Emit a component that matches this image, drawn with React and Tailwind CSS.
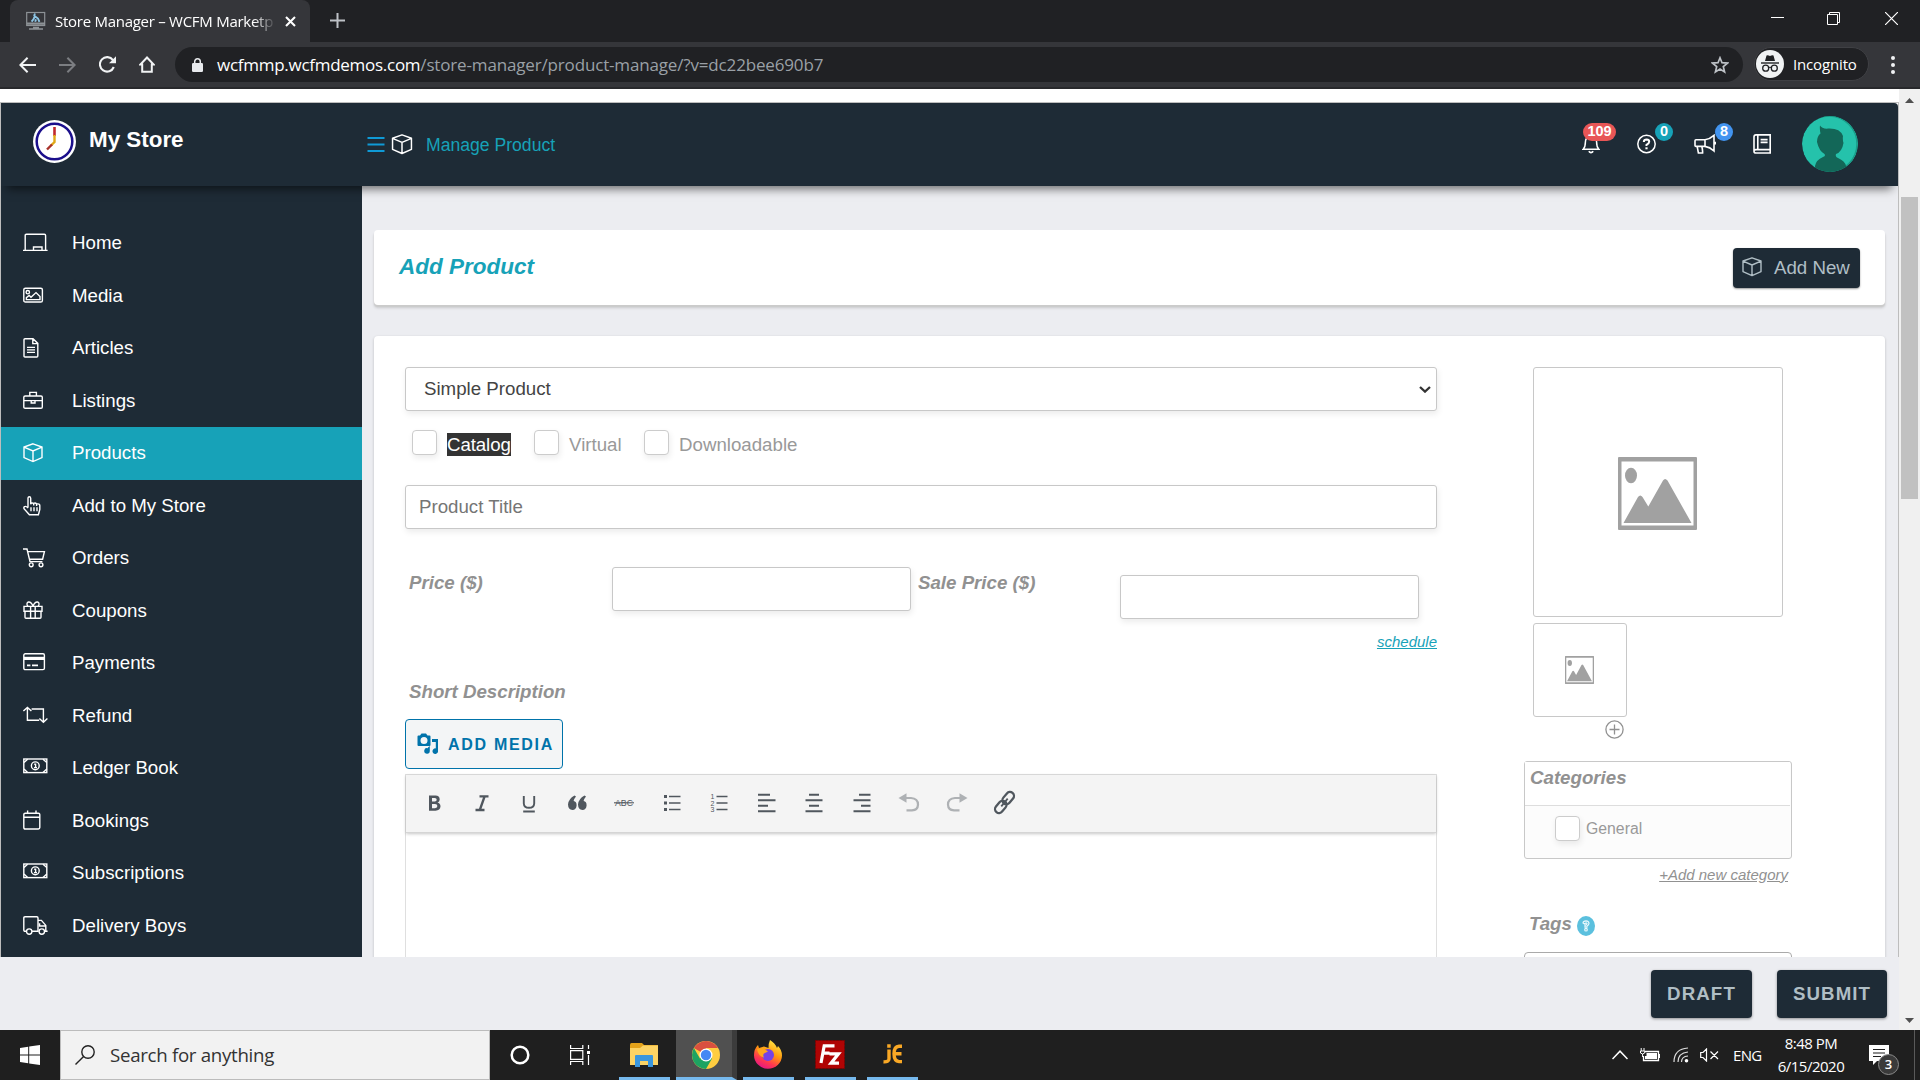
import React from 'react';

// --- CONTENT ---
const menuItems = [
  { label: 'Home', icon: 'home' },
  { label: 'Media', icon: 'media' },
  { label: 'Articles', icon: 'file' },
  { label: 'Listings', icon: 'briefcase' },
  { label: 'Products', icon: 'cube', active: true },
  { label: 'Add to My Store', icon: 'hand' },
  { label: 'Orders', icon: 'cart' },
  { label: 'Coupons', icon: 'gift' },
  { label: 'Payments', icon: 'card' },
  { label: 'Refund', icon: 'retweet' },
  { label: 'Ledger Book', icon: 'bill' },
  { label: 'Bookings', icon: 'calendar' },
  { label: 'Subscriptions', icon: 'bill' },
  { label: 'Delivery Boys', icon: 'truck' },
];

const cubePath = 'M10 .8 19 4v10.6L10 18.6 1 14.6V4zM1 4.2l9 3.8 9-3.8M10 8v10.4';

// Outline icons on a 25x20 grid, all starting at the left edge
const menuIcons = {
  home: <path d="M2.2 17.3V2.4Q2.2 1.2 3.4 1.2H21.4Q22.6 1.2 22.6 2.4V17.3M0 17.4H24.6M10.5 17V14H19V17" />,
  media: (
    <>
      <rect x=".8" y="2.2" width="18.6" height="13.8" rx="1.6" />
      <circle cx="4.8" cy="6.2" r="1.7" />
      <path d="M3.4 13.6V11.6L6.2 9.4 8 11.2 13 6.6 17 10.6V13.6Z" />
    </>
  ),
  file: (
    <>
      <path d="M1 1.8Q1 .8 2 .8H10L14.8 5.4V18Q14.8 19 13.8 19H2Q1 19 1 18ZM9.8 1V5.6H14.6" />
      <path d="M4 9.4H12M4 11.9H12M4 14.4H12" />
    </>
  ),
  briefcase: <path d="M2.2 5H18Q19.3 5 19.3 6.2V16Q19.3 17.2 18 17.2H2.2Q.8 17.2 .8 16V6.2Q.8 5 2.2 5ZM6.8 5V1.4H13.4V5M1 9.6H8.2M12 9.6H19.2M8.2 9.6V12H12V9.6Z" />,
  cube: <path d={cubePath} />,
  hand: <path d="M5 11.6V2.3Q5 .8 6.3 .8T7.7 2.3V8.2Q8.4 6.2 10.7 7.4 12.4 6.4 13.6 8 16.8 7.4 16.8 9.6V13.4L15.4 18.8H6.4L1 12.6Q.4 10.6 2.2 10.4 3.4 10.2 5 12M8 11.2V15.2M11 11.2V15.2M14 11.2V15.2M10.7 7.6V9.6M13.6 8V10" />,
  cart: (
    <>
      <path d="M0 1H4L7 13.6H19.4M5 3.6H21.4L19.6 11.2H6.6" />
      <circle cx="8.2" cy="16.8" r="1.9" />
      <circle cx="18" cy="16.8" r="1.9" />
    </>
  ),
  gift: <path d="M1 5.4H19V10.2H1ZM2 10.4V16.2Q2 17.2 3 17.2H17Q18 17.2 18 16.2V10.4M7.6 5.4V17M12.2 5.4V17M10 5.2Q8.4 .8 5.6 1 3.4 1.4 4.2 4L5 5.4M10 5.2Q11.6 .8 14.4 1 16.6 1.4 15.8 4L15 5.4" />,
  card: (
    <>
      <rect x=".8" y=".8" width="20.6" height="15.8" rx="1.4" />
      <path d="M1 5.4H21.4" strokeWidth="3.2" />
      <path d="M4 12.4H7.4M9 12.4H15" strokeWidth="1.6" />
    </>
  ),
  retweet: <path d="M.4 5 4.4 1.4 8.4 5M4.4 1.6V14.2H16.2M8.6 3H20.4V15.4M16.4 12.6 20.4 16.2 24.4 12.6" />,
  bill: (
    <>
      <rect x=".8" y="1" width="23" height="13.6" />
      <circle cx="12.3" cy="7.8" r="3.9" />
      <path d="M11.2 6.2H12.6V9.6M11 9.6H14M1 4.6 4.6 1.2M20 1.2 23.8 4.6M1 11 4.6 14.4M20 14.4 23.8 11" />
    </>
  ),
  calendar: <path d="M2.2 2.2H15.4Q16.8 2.2 16.8 3.6V16.6Q16.8 18 15.4 18H2.2Q.8 18 .8 16.6V3.6Q.8 2.2 2.2 2.2ZM.8 6.2H16.8M4.6 2.2V-.6M13 2.2V-.6" />,
  truck: (
    <>
      <path d="M3.4 15.2H2Q.8 15.2 .8 14V2Q.8 .8 2 .8H13.8Q15 .8 15 2V15.2H9M15 4.4H18.4L22.8 9.4V15.2H21.4M24.6 15.2H22M16.6 7.2V10H22.6" />
      <circle cx="6.2" cy="15.6" r="2.7" />
      <circle cx="18.8" cy="15.6" r="2.7" />
    </>
  ),
};

function MenuIcon({ name }) {
  return (
    <svg className="h-5 w-[25px] overflow-visible" viewBox="0 0 25 20" fill="none" stroke="currentColor" strokeWidth="1.4">
      {menuIcons[name]}
    </svg>
  );
}

function Cube({ className }) {
  return (
    <svg className={className} viewBox="0 0 20 20" fill="none" stroke="currentColor" strokeWidth="1.4" strokeLinejoin="round">
      <path d={cubePath} />
    </svg>
  );
}

// --- BROWSER CHROME ---
function TabStrip() {
  return (
    <div className="flex h-[42px] items-start bg-[#202124] text-[#e8eaed]">
      <div className="ml-[10px] flex h-[42px] w-[300px] items-center rounded-t-lg bg-[#35363a] pl-4">
        <svg className="h-5 w-5 shrink-0" viewBox="0 0 20 20" fill="none" stroke="#8d9296">
          <rect x=".7" y="1.5" width="18" height="13" strokeWidth="1.2" />
          <path d="M1 12.2H19M1 14H19" strokeWidth="1.5" />
          <path d="M7 16.5H13M3 18H17" strokeWidth="1.3" />
          <path d="M9 2.5 8 5M8.6 5 12 7.5 13.4 10.8M9 5 7.6 8 5.6 10.6M10 8.4 9.2 10.8" stroke="#8cc4e4" strokeWidth="1.9" />
        </svg>
        <div className="ml-[9px] w-[221px] text-[15px] tracking-[-0.27px] whitespace-nowrap text-white [mask-image:linear-gradient(to_right,black_90%,transparent)]">
          Store Manager – WCFM Marketp
        </div>
        <svg className="ml-[9px] h-[11px] w-[11px] shrink-0" viewBox="0 0 11 11" stroke="#fff" strokeWidth="2.1">
          <path d="M1 1 10 10M10 1 1 10" />
        </svg>
      </div>
      <svg className="mt-[13px] ml-5 h-[15px] w-[15px]" viewBox="0 0 15 15" stroke="#bdc1c6" strokeWidth="2">
        <path d="M7.5 0V15M0 7.5H15" />
      </svg>
      <div className="mt-3 mr-[22px] ml-auto flex h-[13px] items-center">
        <svg className="h-[13px] w-[13px]" viewBox="0 0 13 13" stroke="#fff">
          <path d="M0 5.5H13" />
        </svg>
        <svg className="ml-[43px] h-[13px] w-[13px]" viewBox="0 0 13 13" fill="none" stroke="#fff">
          <path d="M.5 2.5H10.5V12.5H.5ZM2.5 2.5V.5H12.5V10.5H10.5" />
        </svg>
        <svg className="ml-[45px] h-[13px] w-[13px]" viewBox="0 0 13 13" stroke="#fff" strokeWidth="1.2">
          <path d="M0 0 13 13M13 0 0 13" />
        </svg>
      </div>
    </div>
  );
}

function AddressBar() {
  return (
    <div className="flex h-[47px] items-start border-b-2 border-[#28292c] bg-[#35363a] pt-[5px] text-[#e8eaed]">
      <div className="flex h-[35px] w-[175px] items-center gap-6 pl-[19px]">
        <svg className="h-4 w-[17px]" viewBox="0 0 17 16" fill="none" stroke="#f1f3f4" strokeWidth="2">
          <path d="M17 8H2M8.6 .8 1.4 8 8.6 15.2" />
        </svg>
        <svg className="-ml-px h-4 w-[17px]" viewBox="0 0 17 16" fill="none" stroke="#7c7e82" strokeWidth="2">
          <path d="M0 8H15M8.4 .8 15.6 8 8.4 15.2" />
        </svg>
        <svg className="-ml-px h-[17px] w-[17px]" viewBox="0 0 17 17" fill="none" stroke="#f1f3f4" strokeWidth="2.1">
          <path d="M14.8 11A7.2 7.2 0 1 1 14 4.2" />
          <path d="M17 .3V7.2H10Z" fill="#f1f3f4" stroke="none" />
        </svg>
        <svg className="-ml-px h-[17px] w-4" viewBox="0 0 16 17" fill="none" stroke="#f1f3f4" strokeWidth="2">
          <path d="M8 1.5 14.5 8.4H12.8V15.8H3.2V8.4H1.5Z" />
        </svg>
      </div>
      <div className="flex h-[35px] w-[1568px] items-center rounded-full bg-[#202124] pr-[14px] pl-[17px]">
        <svg className="h-[14px] w-[11px]" viewBox="0 0 11 14" fill="none">
          <rect y="5" width="11" height="9" rx="1.2" fill="#e8eaed" />
          <path d="M2.7 6V3.6A2.8 2.8 0 0 1 8.3 3.6V6" stroke="#e8eaed" strokeWidth="1.5" />
        </svg>
        <div className="ml-[14px] text-[17px] tracking-[-0.16px] text-[#9aa0a6]">
          <span className="tracking-[-0.27px] text-white">wcfmmp.wcfmdemos.com</span>/store-manager/product-manage/?v=dc22bee690b7
        </div>
        <svg className="ml-auto h-[18px] w-[18px]" viewBox="0 0 18 18" fill="none" stroke="#bdc1c6" strokeWidth="1.7">
          <path d="M9 1.8 11 6.7 16.5 7.1 12.3 10.6 13.6 16 9 13.1 4.4 16 5.7 10.6 1.5 7.1 7 6.7Z" />
        </svg>
      </div>
      <div className="ml-[11px] flex h-[34px] w-[115px] items-center rounded-full border border-[#3f4044] bg-[#202124] pl-px">
        <svg className="h-7 w-7" viewBox="0 0 28 28" fill="none">
          <circle cx="14" cy="14" r="14" fill="#f1f3f4" />
          <path d="M10.5 5.5Q12 5 14 6 16 5 17.5 5.5L19 11H9Z" fill="#202124" />
          <path d="M5 13H23" stroke="#202124" strokeWidth="1.4" />
          <circle cx="9.7" cy="18.2" r="3" stroke="#202124" strokeWidth="1.3" />
          <circle cx="18.3" cy="18.2" r="3" stroke="#202124" strokeWidth="1.3" />
          <path d="M12.7 17.6Q14 16.8 15.3 17.6" stroke="#202124" />
        </svg>
        <span className="ml-[9px] text-[15px] tracking-[-0.15px] text-white">Incognito</span>
      </div>
      <div className="mt-[9px] ml-[22px] flex flex-col gap-[3px]">
        <i className="h-1 w-1 rounded-full bg-[#f1f3f4]" />
        <i className="h-1 w-1 rounded-full bg-[#f1f3f4]" />
        <i className="h-1 w-1 rounded-full bg-[#f1f3f4]" />
      </div>
    </div>
  );
}

// --- STORE MANAGER ---
function Badge({ className, children }) {
  return (
    <span className={`absolute flex h-[18px] items-center justify-center rounded-full text-[14.5px] font-bold text-white ${className}`}>
      {children}
    </span>
  );
}

function StoreHeader() {
  return (
    <header className="relative z-10 flex h-[83px] items-center rounded-tr bg-[#1e2b36] text-white shadow-[0_9px_9px_-6px_rgba(0,0,0,0.55)]">
      <div className="-mt-[6px] flex w-[366px] items-center pl-8">
        <svg className="h-[43px] w-[43px]" viewBox="0 0 43 43" fill="none">
          <circle cx="21.5" cy="21.5" r="21.5" fill="#fff" />
          <circle cx="21.5" cy="21.5" r="17.8" stroke="#1b0f8c" strokeWidth="2.5" />
          <path d="M21.5 7V16" stroke="#c0282d" strokeWidth="2.6" />
          <path d="M21.5 15V22L18 25.5" stroke="#e0a818" strokeWidth="2.4" />
          <path d="M19 24.5 14 29.5" stroke="#a8322a" strokeWidth="2.4" />
        </svg>
        <span className="-mt-[3px] ml-[13px] text-[22.4px] leading-[26px] font-bold">My Store</span>
      </div>
      <svg className="-mt-px h-[15px] w-[18px]" viewBox="0 0 18 15" stroke="#0f9ad6" strokeWidth="2">
        <path d="M.5 1H17.5M.5 7.5H17.5M.5 14H17.5" />
      </svg>
      <Cube className="ml-[6px] h-[21px] w-[22px]" />
      <span className="mt-px ml-[13px] text-[17.6px] text-[#17a2b8]">Manage Product</span>

      <div className="-mt-px mr-10 ml-auto flex items-center">
        <div className="relative -ml-px h-5 w-[18px]">
          <svg className="h-5 w-[18px]" viewBox="0 0 18 20" fill="none" stroke="currentColor" strokeWidth="1.5">
            <path d="M1.2 15.2Q3.4 13 3.4 8 3.4 3 9 2.6 14.6 3 14.6 8 14.6 13 16.8 15.2Z" />
            <path d="M6.8 17.2Q9 20 11.2 17.2" strokeWidth="1.7" />
          </svg>
          <Badge className="-top-[11px] left-[1px] w-[33px] bg-[#e85656]">109</Badge>
        </div>
        <div className="relative ml-[37px] h-5 w-[19px]">
          <svg className="h-5 w-[19px]" viewBox="0 0 19 20" fill="none" stroke="currentColor" strokeWidth="1.5">
            <circle cx="9.5" cy="10" r="8.7" />
            <path d="M6.8 8Q7 5.6 9.6 5.6 12.2 5.7 12.2 7.8 12.2 9.3 9.5 10.8V12" strokeWidth="2" />
            <path d="M8.4 14.3H10.6" strokeWidth="2" />
          </svg>
          <Badge className="-top-[11px] left-[18px] w-[18px] bg-[#17a2b8]">0</Badge>
        </div>
        <div className="relative ml-[38px] h-5 w-[22px]">
          <svg className="h-5 w-[22px]" viewBox="0 0 22 20" fill="none" stroke="currentColor" strokeWidth="1.6">
            <path d="M2 5.8H11V12.4H2Q1 12.4 1 11.4V6.8Q1 5.8 2 5.8ZM11 5.8Q16 5 20 1.4V17Q16 13.2 11 12.4M3.2 12.6 4.4 19H8.6Q8.8 16 7.8 12.6M21.3 7.8V10.6" />
          </svg>
          <Badge className="-top-[11px] left-[21px] w-[18px] bg-[#4294f0]">8</Badge>
        </div>
        <svg className="ml-[37px] h-5 w-[18px]" viewBox="0 0 18 20" fill="none" stroke="currentColor" strokeWidth="1.6">
          <path d="M17.2 15.6H3Q1 15.8 1 17.4 1 19 3 19H17.2ZM1 17.2V3Q1 .9 3 .9H17.2V15.6M4.8 1V15.4M7.6 5.6H14.6M7.6 8.4H14.6" />
        </svg>
        <svg className="ml-[31px] h-14 w-14" viewBox="0 0 56 56">
          <defs>
            <clipPath id="avatar">
              <circle cx="28" cy="28" r="28" />
            </clipPath>
          </defs>
          <g clipPath="url(#avatar)">
            <circle cx="28" cy="28" r="28" fill="#25c2ab" />
            <circle cx="27" cy="28" r="28" fill="none" stroke="#1a9c88" strokeWidth="1.5" />
            <path d="M18 9.5Q20 13 26 12.6 38 12 41 20 40.5 24 41.5 27 40 36 34 38 33 41 36 42 43 45 44 50V58H13V50Q14 44 21 41 24 40 22.5 38 17 35 15 26 15 20 18.5 17.5 17.5 13 18 9.5Z" fill="#136758" />
          </g>
        </svg>
      </div>
    </header>
  );
}

function Sidebar() {
  return (
    <nav className="w-[361px] shrink-0 bg-[#1e2b36] pt-[31px]">
      {menuItems.map((item) => (
        <a
          key={item.label}
          className={`flex h-[52.5px] items-center pl-[22px] text-[18.7px] text-white ${item.active ? 'bg-[#17a2b8]' : ''}`}
        >
          <MenuIcon name={item.icon} />
          <span className="ml-6">{item.label}</span>
        </a>
      ))}
    </nav>
  );
}

function Field({ className, children }) {
  return (
    <div className={`flex h-11 items-center rounded-[3px] border border-[#c8c8c8] bg-white shadow-[1px_3px_6px_rgba(0,0,0,0.08)] ${className}`}>
      {children}
    </div>
  );
}

function Checkbox() {
  return <span className="h-[25px] w-[25px] shrink-0 rounded border border-[#ccc] bg-white shadow-[1px_3px_6px_rgba(0,0,0,0.08)]" />;
}

// Placeholder drawn in the empty image boxes
function Picture({ className }) {
  return (
    <svg className={className} viewBox="0 0 79 73" fill="#a1a1a1" preserveAspectRatio="none">
      <path d="M1 0H78Q79 0 79 1V72Q79 73 78 73H1Q0 73 0 72V1Q0 0 1 0ZM3.5 4.5V68.5H75.5V4.5Z" fillRule="evenodd" />
      <ellipse cx="13" cy="18.5" rx="6" ry="7.8" />
      <path d="M5.5 66 20 40Q22.3 37 24.5 40L30.3 49.5 45 23.5Q47 20.5 49.5 23.5L73.5 66Z" />
    </svg>
  );
}

const toolbarIcons = [
  <path key="b" d="M5 2.5H11.5Q15.7 2.8 15.7 6.4 15.6 8.8 13.5 9.6 16.5 10.500 16.5 13.600 16.2 17.6 11.5 17.8H5ZM8 5V8.6H10.8Q12.7 8.400 12.7 6.800 12.6 5.2 10.8 5ZM8 11V15.3H11Q13.4 15.1 13.4 13.100 13.3 11.2 11 11Z" fill="currentColor" fillRule="evenodd" stroke="none" />,
  <path key="i" d="M7.5 3.4H16.5M3.5 17H12.5M12.4 4 7.8 17" strokeWidth="2.3" />,
  <path key="u" d="M4.8 3V10.5Q5 14.8 10 14.8T15.2 10.5V3M4.2 18.5H15.8" strokeWidth="1.9" />,
  <path key="q" d="M7.5 2.5 9 3.6Q7 6 6.6 8 9.6 8.4 9.6 12.4 9.2 16.8 5.4 17 1.2 16.8 1 11.6 1.4 5.8 7.5 2.5ZM17.500 2.5 19 3.6Q17 6 16.6 8 19.6 8.4 19.6 12.4 19.2 16.8 15.4 17 11.2 16.8 11 11.6 11.4 5.8 17.5 2.5Z" fill="currentColor" stroke="none" />,
  <g key="s">
    <text x="10" y="13.2" textAnchor="middle" fontSize="9.5" fill="currentColor" stroke="none" textLength="18" lengthAdjust="spacingAndGlyphs">ABC</text>
    <path d="M0 9.8H20" strokeWidth="1.1" />
  </g>,
  <g key="ul">
    <path d="M7 3.5H18.5M7 10H18.5M7 16.5H18.5" strokeWidth="1.3" />
    <path d="M2 3.5H5M2 10H5M2 16.5H5" strokeWidth="3.2" />
  </g>,
  <g key="ol">
    <path d="M7.5 3.5H18.5M7.5 10H18.5M7.5 16.5H18.5" strokeWidth="1.3" />
    <g fontSize="7" fill="currentColor" stroke="none">
      <text x="1.5" y="6">1</text>
      <text x="1.5" y="12.5">2</text>
      <text x="1.5" y="19">3</text>
    </g>
  </g>,
  <path key="al" d="M1 1.8H13M1 7.3H18.5M1 12.7H11M1 18.2H18.5" strokeWidth="2.1" />,
  <path key="ac" d="M5 1.8H15M1.5 7.3H18.5M5 12.7H15M1.5 18.2H18.5" strokeWidth="2.1" />,
  <path key="ar" d="M7 1.8H18.5M1.5 7.3H18.5M9 12.7H18.5M1.5 18.2H18.5" strokeWidth="2.1" />,
  <g key="undo" opacity=".42">
    <path d="M5 5H12Q19 5.4 19 11.6 18.8 17 13 17.4H7.5" strokeWidth="2.2" />
    <path d="M7.5 .2V9.8L-.5 5Z" fill="currentColor" stroke="none" />
  </g>,
  <g key="redo" opacity=".42">
    <path d="M15 5H8Q1 5.4 1 11.6 1.2 17 7 17.4H12.5" strokeWidth="2.2" />
    <path d="M12.5 .2V9.8L20.5 5Z" fill="currentColor" stroke="none" />
  </g>,
  <g key="link" transform="rotate(-50 10.5 9.5)" strokeWidth="2.3">
    <rect x="-2" y="5.500" width="13.5" height="8" rx="4" />
    <rect x="9.500" y="5.5" width="13.5" height="8" rx="4" />
    <path d="M5.5 9.5H15.5" strokeWidth="1.8" />
  </g>,
];

function ProductForm() {
  return (
    <div className="w-[1032px]">
      <Field className="justify-between pr-[5px] pl-[18px] text-[18.7px] text-[#444]">
        Simple Product
        <svg className="h-[7px] w-3" viewBox="0 0 12 7" fill="none" stroke="#333" strokeWidth="2.3">
          <path d="M1 1 6 5.6 11 1" />
        </svg>
      </Field>

      <div className="mt-[19px] flex h-[25px] pl-[7px] text-[18.7px] leading-[23px] text-[#999]">
        <Checkbox />
        <span className="mt-[3px] ml-[10px] h-[23px] w-16 bg-[#333] tracking-[-0.1px] text-white">Catalog</span>
        <span className="w-[23px]" />
        <Checkbox />
        <span className="mt-[3px] ml-[10px] w-[75px]">Virtual</span>
        <Checkbox />
        <span className="mt-[3px] ml-[10px]">Downloadable</span>
      </div>

      <Field className="mt-[30px] pl-[13px] text-[18.7px] text-[#757575]">Product Title</Field>

      <div className="mt-[38px] flex text-[18.7px] leading-[24px] font-bold text-[#919191] italic">
        <span className="mt-1 w-[207px] pl-1">Price ($)</span>
        <Field className="w-[299px]" />
        <span className="mt-1 ml-[7px] w-[202px]">Sale Price ($)</span>
        <Field className="mt-2 w-[299px]" />
      </div>
      <div className="mt-[12px] text-right text-[15px] leading-[21px] text-[#17a2b8] italic underline">schedule</div>

      <div className="mt-7 pl-1 text-[18.7px] leading-[24px] font-bold text-[#919191] italic">Short Description</div>
      <button className="mt-[15px] flex h-[50px] w-[158px] items-center rounded border border-[#0073aa] bg-[#f3f5f6] pl-[11px] text-[16px] font-bold tracking-[1.7px] text-[#0073aa]">
        <svg className="-mt-px h-[21px] w-[21px]" viewBox="0 0 21 21" fill="currentColor">
          <path d="M1.5 2.500H3L4.5 .5H9L10.5 2.5H12.5Q13.5 2.5 13.5 3.5V12Q13.5 13 12.5 13H1.5Q.5 13 .5 12V3.5Q.5 2.500 1.5 2.5ZM7 4A3.5 3.5 0 1 0 7 11 3.5 3.5 0 1 0 7 4Z" fillRule="evenodd" />
          <path d="M15 6H21V17.5A2.8 2.8 0 1 1 18.8 15.4V9H15ZM12.8 13V18A2.8 2.8 0 1 1 10.7 15.2L11 14.5Z" />
        </svg>
        <span className="mt-px ml-[10px] whitespace-nowrap">ADD MEDIA</span>
      </button>

      <div className="mt-[5px] h-[260px] border border-[#dfdfdf] bg-white">
        <div className="flex h-[58px] items-center gap-[27.5px] border-b border-[#d5d5d5] bg-[#f4f4f4] pb-px pl-[18px] text-[#50575e] shadow-[0_1px_3px_rgba(0,0,0,0.22)]">
          {toolbarIcons.map((icon) => (
            <svg key={icon.key} className="h-5 w-5 shrink-0 overflow-visible" viewBox="0 0 20 20" fill="none" stroke="currentColor">
              {icon}
            </svg>
          ))}
        </div>
      </div>
    </div>
  );
}

function SidePanel() {
  return (
    <div className="ml-24 w-[268px]">
      <div className="flex h-[250px] w-[250px] items-center justify-center rounded-[3px] border border-[#c8c8c8]">
        <Picture className="mt-[2px] mr-px h-[73px] w-[79px]" />
      </div>
      <div className="mt-[6px] flex h-[94px] w-[94px] items-center justify-center rounded-[3px] border border-[#c8c8c8]">
        <Picture className="mr-px h-7 w-[29px]" />
      </div>
      <svg className="mt-[3px] ml-[71.5px] h-[19px] w-[19px]" viewBox="0 0 19 19" fill="none" stroke="#919191" strokeWidth="1.3">
        <circle cx="9.5" cy="9.5" r="8.6" />
        <path d="M9.5 4.5V14.5M4.5 9.5H14.5" />
      </svg>

      <div className="mt-[22px] -ml-[9px] h-[98px] w-[268px] rounded-[3px] border border-[#c8c8c8] bg-[#fcfcfc]">
        <div className="mr-px h-11 border-b border-[#ddd] bg-white pt-1 pl-[5px] text-[18.7px] leading-[24px] font-bold text-[#919191] italic">Categories</div>
        <div className="mt-[10px] flex items-center pl-[30px] text-[15.8px] text-[#999]">
          <Checkbox />
          <span className="mt-px ml-[6px]">General</span>
        </div>
      </div>
      <div className="mt-[5px] -ml-[9px] w-[264px] text-right text-[15px] leading-[21px] text-[#919191] italic underline">+Add new category</div>

      <div className="mt-[27px] -ml-[4px] flex h-6 items-center text-[18.7px] leading-[24px] font-bold text-[#919191] italic">
        Tags
        <span className="mt-[3px] ml-[5px] flex h-5 w-[18px] items-center justify-center rounded-[50%] bg-[#5bc0de]">
          <svg className="h-3 w-2" viewBox="0 0 8 12" fill="none" stroke="#e9f8fc" strokeWidth="1.2">
            <path d="M1 3Q1.2 .8 4 .8 7 1 7 3.5 6.8 5 5 6V7.2H3V5.4Q5 4.6 5 3.5 4.6 2.6 3.5 3.2L2.5 4Z" />
            <circle cx="4" cy="9.7" r="1.3" />
          </svg>
        </span>
      </div>
      <div className="mt-[16px] -ml-[9px] h-[60px] w-[268px] rounded border border-[#aaa] bg-white" />
    </div>
  );
}

function Content() {
  return (
    <main className="min-w-0 flex-1 overflow-hidden bg-[#ecedf1] pt-11 pr-[13px] pl-3">
      <div className="flex h-[75px] items-center justify-between rounded bg-white pr-[25px] pl-[25px] shadow-[0_2px_1px_#cbcbcb,0_3px_3px_rgba(0,0,0,0.15)]">
        <h2 className="-mt-px text-[22.5px] font-bold text-[#17a2b8] italic">Add Product</h2>
        <button className="flex h-10 w-[127px] items-center rounded bg-[#1e2b36] pl-[9px] text-[18.7px] text-[#b0bec5] shadow-[0_1px_2px_rgba(0,0,0,0.4)]">
          <Cube className="-mt-[2px] h-5 w-5" />
          <span className="mt-[2px] ml-3 whitespace-nowrap">Add New</span>
        </button>
      </div>
      <div className="mt-[31px] flex h-[700px] rounded bg-white pt-[31px] pl-[31px] shadow-[0_1px_3px_rgba(0,0,0,0.2)]">
        <ProductForm />
        <SidePanel />
      </div>
    </main>
  );
}

function Scrollbar() {
  return (
    <div className="flex w-[21px] flex-col items-center bg-[#f0f0f0]">
      <svg className="mt-[9px] h-[5px] w-[9px]" viewBox="0 0 9 5" fill="#505050">
        <path d="M0 5 4.5 0 9 5Z" />
      </svg>
      <div className="mt-[94px] h-[302px] w-[17px] bg-[#c1c1c1]" />
      <svg className="mt-auto mb-[7px] h-[5px] w-[9px]" viewBox="0 0 9 5" fill="#505050">
        <path d="M0 0 4.5 5 9 0Z" />
      </svg>
    </div>
  );
}

function FormButton({ className, children }) {
  return (
    <button className={`flex h-12 items-center justify-center rounded bg-[#1e2b36] pt-px text-[18.7px] font-bold tracking-[1.1px] text-[#b0bec5] shadow-[0_1px_3px_rgba(0,0,0,0.4)] ${className}`}>
      {children}
    </button>
  );
}

// --- WINDOWS TASKBAR ---
function TaskApp({ className, children }) {
  return <div className={`flex h-[50px] items-center justify-center border-b-[3px] border-[#76b9ed] ${className}`}>{children}</div>;
}

function Taskbar() {
  return (
    <footer className="flex h-[50px] items-center bg-[#1f1f1f] font-['Open_Sans','Noto_Sans',sans-serif] text-white">
      <div className="flex w-[60px] pl-5">
        <svg className="h-5 w-5" viewBox="0 0 20 20" fill="#fff">
          <path d="M0 2.9 8.2 1.7V9.5H0ZM9.2 1.5 20 0V9.5H9.2ZM0 10.5H8.2V18.3L0 17.1ZM9.2 10.5H20V20L9.2 18.5Z" />
        </svg>
      </div>
      <div className="flex h-[50px] w-[430px] items-center border border-[#bcbcbc] bg-[#f2f2f2] pl-[14px] text-[18.7px] tracking-[-0.3px] text-[#333]">
        <svg className="h-5 w-5" viewBox="0 0 20 20" fill="none" stroke="#222" strokeWidth="1.4">
          <circle cx="13" cy="7" r="6.2" />
          <path d="M8.6 11.5 .5 19.5" />
        </svg>
        <span className="ml-[15px]">Search for anything</span>
      </div>
      <svg className="ml-5 h-5 w-5" viewBox="0 0 20 20" fill="none" stroke="#fff" strokeWidth="2.5">
        <circle cx="10" cy="10" r="8.3" />
      </svg>
      <svg className="ml-10 h-5 w-5" viewBox="0 0 20 20" fill="none" stroke="#fff" strokeWidth="1.2">
        <path d="M.6 0V3.5H12.8V0M.6 5.6H12.8V14.4H.6ZM.6 20V16.5H12.8V20M18.5 0V4M18.5 10V20" />
        <path d="M17 6H20V9H17Z" fill="#fff" stroke="none" />
      </svg>

      <TaskApp className="ml-[29px] w-[51px] pt-[2px] pr-px">
        <svg className="h-6 w-7" viewBox="0 0 28 24">
          <path d="M0 2Q0 0 1.5 0H12L14 2H28V8H0Z" fill="#e3a21a" />
          <path d="M0 5H10L13 2.5H28V22H0Z" fill="#fcd364" />
          <path d="M5 13Q5 12 6 12H22Q23 12 23 13V24H18V18H10V24H5Z" fill="#3a96dd" />
        </svg>
      </TaskApp>
      <TaskApp className="ml-[6px] w-[61px] border-r-[5px] border-r-[#3c3c3c] bg-[#505050] pt-[2px]">
        <svg className="ml-[3px] h-7 w-7" viewBox="0 0 28 28">
          <circle cx="14" cy="14" r="14" fill="#ffcd40" />
          <path d="M14 14 1.9 7A14 14 0 0 1 26.1 7H14Z" fill="#d9503f" />
          <path d="M14 14 7.9 17.5 1.9 7A14 14 0 0 0 14 28L20 17.5Z" fill="#1da362" />
          <circle cx="14" cy="14" r="6.5" fill="#fff" />
          <circle cx="14" cy="14" r="5.2" fill="#4688f4" />
        </svg>
      </TaskApp>
      <TaskApp className="ml-[6px] w-[51px] pt-px pr-[2px]">
        <svg className="h-[29px] w-7" viewBox="0 0 28 29">
          <defs>
            <linearGradient id="fox" x1="0.8" y1="0" x2="0.3" y2="1">
              <stop offset="0" stopColor="#fff14a" />
              <stop offset=".45" stopColor="#ff980e" />
              <stop offset=".75" stopColor="#ff3750" />
              <stop offset="1" stopColor="#e31587" />
            </linearGradient>
          </defs>
          <path d="M16 0Q21 3 23 8L24 6Q28 10 28 15.5A14 13.5 0 0 1 0 15Q0 9 4 5L5 8 10 6.5 14.5 8Q14.5 3 16 0Z" fill="url(#fox)" />
          <circle cx="14" cy="15" r="6" fill="#7542e5" />
          <path d="M3 9 9 8 14 11.5 10 13.5Q8.5 15 10 17.5 4 16 3 9Z" fill="#ffa71c" />
        </svg>
      </TaskApp>
      <TaskApp className="ml-[11px] w-[51px] pt-[2px] pr-px">
        <svg className="h-[29px] w-[30px]" viewBox="0 0 30 29">
          <rect x=".5" y=".5" width="29" height="28" fill="#b00404" stroke="#7c0000" strokeDasharray="2 1.5" />
          <path d="M6 23 9.2 5.8H19.500M8 13.200H14.5M14.5 13.8H23.5L16 23.2H24" fill="none" stroke="#fff" strokeWidth="3.2" />
        </svg>
      </TaskApp>
      <TaskApp className="ml-[11px] w-[51px] pr-[2px]">
        <svg className="h-5 w-5" viewBox="0 0 20 20" fill="none" stroke="#f9a825" strokeWidth="3.4">
          <path d="M7 5.500V15Q6.8 18.2 1.5 17.8M5.2 2H8.7M20 2.2H17Q12 2.5 12 9.8T17 17.600H20M11.500 9.8H19.5" />
        </svg>
      </TaskApp>

      <div className="ml-auto flex h-[50px] items-center">
        <svg className="h-[10px] w-4" viewBox="0 0 16 10" fill="none" stroke="#fff" strokeWidth="1.5">
          <path d="M.5 9 8 1.2 15.5 9" />
        </svg>
        <svg className="ml-3 h-[14px] w-5" viewBox="0 0 20 14" fill="none" stroke="#fff">
          <path d="M5 3.5H18.5V12.5H3.5V8" strokeWidth="1.3" />
          <path d="M6.5 5H17V11H5V8H6.5ZM19 6H20V10H19Z" fill="#fff" stroke="none" />
          <path d="M1.2 0V3M4 0V3M.5 3H4.7V5Q2.6 7 .5 5ZM2.6 6V9" />
        </svg>
        <svg className="ml-[13px] h-4 w-4" viewBox="0 0 16 16" fill="none" stroke="#ddd" strokeWidth="1.2">
          <path d="M1 15Q1 2 15 1M5 15Q5 6 15 5M8.5 15Q8.5 9.5 15 9" />
          <circle cx="13.5" cy="13.8" r="1.8" fill="#fff" stroke="none" />
        </svg>
        <svg className="ml-[11px] h-[14px] w-[19px]" viewBox="0 0 19 14" fill="none" stroke="#fff" strokeWidth="1.2">
          <path d="M.7 4.5H3L6.5 1V13L3 9.5H.7ZM10.5 3.5 18 11M18 3.5 10.5 11" />
        </svg>
        <span className="ml-[14px] w-11 text-[15px] tracking-[-0.7px]">ENG</span>
        <div className="w-[68px] text-center text-[15px] leading-[23px] tracking-[-0.5px] whitespace-nowrap">
          <div>8:48 PM</div>
          <div>6/15/2020</div>
        </div>
        <div className="relative ml-6 h-5 w-5">
          <svg className="h-5 w-5" viewBox="0 0 20 20" fill="#fff">
            <path d="M0 0H20V16H8L4 20V16H0Z" />
            <path d="M4 4.5H16M4 8H16M4 11.5H12" stroke="#1f1f1f" strokeWidth="1.1" />
          </svg>
          <span className="absolute top-[9px] left-[9px] flex h-[21px] w-[21px] items-center justify-center rounded-full border border-[#8a8a8a] bg-[#3a3a3a] text-[13px] font-semibold">3</span>
        </div>
        <i className="ml-[25px] h-[50px] w-px bg-[#5a5a5a]" />
        <i className="w-[5px]" />
      </div>
    </footer>
  );
}

export default function App() {
  return (
    <div className="flex h-[1080px] w-[1920px] flex-col overflow-hidden bg-white font-['Liberation_Sans',Arial,sans-serif]">
      <div className="font-['Open_Sans','Noto_Sans',sans-serif]">
        <TabStrip />
        <AddressBar />
      </div>
      <div className="flex h-[941px]">
        <div className="flex w-[1899px] flex-col">
          <div className="mt-[13px] flex h-[855px] flex-col overflow-hidden border-x border-t border-[#bdbdbd]">
            <StoreHeader />
            <div className="flex min-h-0 flex-1">
              <Sidebar />
              <Content />
            </div>
          </div>
          <div className="flex h-[73px] items-center justify-end gap-[25px] bg-[#ecedf1] pr-3">
            <FormButton className="w-[101px]">DRAFT</FormButton>
            <FormButton className="w-[110px]">SUBMIT</FormButton>
          </div>
        </div>
        <Scrollbar />
      </div>
      <Taskbar />
    </div>
  );
}
